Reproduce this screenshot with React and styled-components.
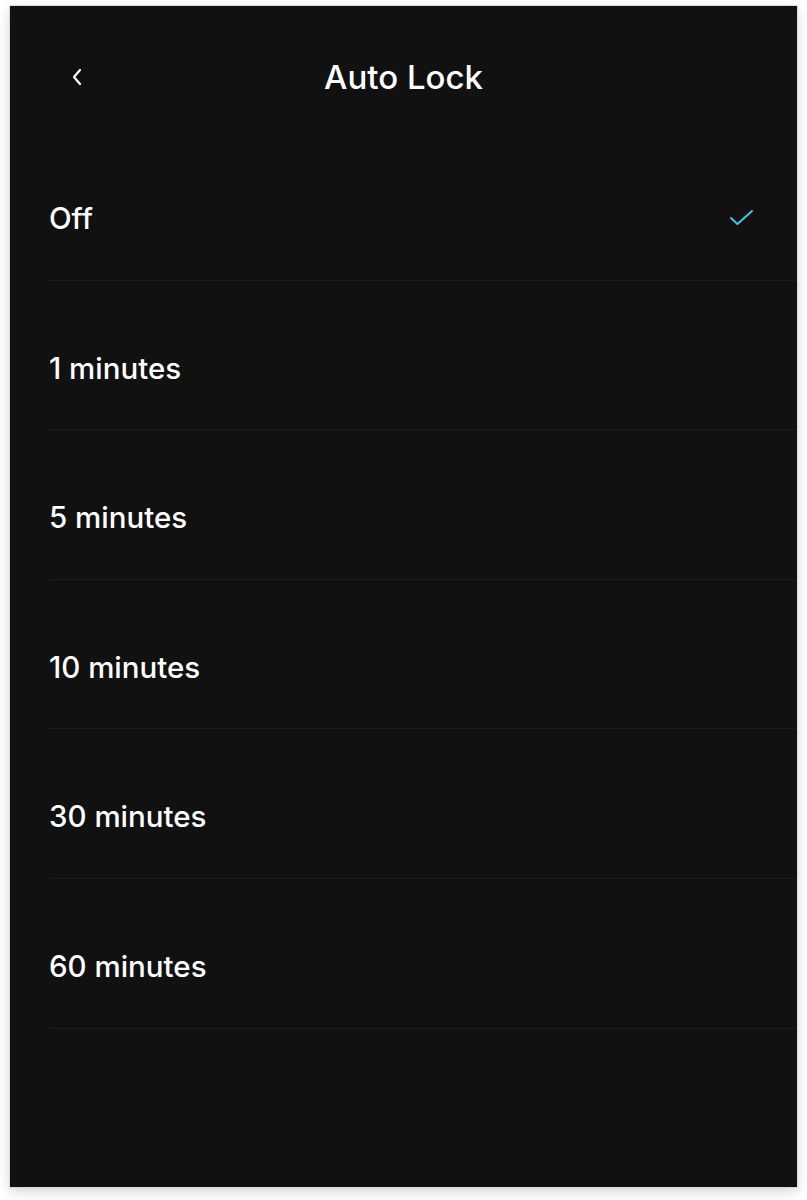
import React from "react";
import styled, { createGlobalStyle } from "styled-components";

const Global = createGlobalStyle`
  html, body { margin: 0; padding: 0; background: #ffffff; }
  body { font-family: Inter, "Noto Sans", sans-serif; }
`;

const Page = styled.div`
  padding: 6px 10px 13px 10px;
`;

const Panel = styled.div`
  background: #111111;
  height: 1181px;
  box-sizing: border-box;
  box-shadow: 0 0 0 1px #d9d9d9, 0 4px 12px rgba(0, 0, 0, 0.18);
  display: flex;
  flex-direction: column;
  color: #ffffff;
`;

const Header = styled.div`
  height: 125px;
  box-sizing: border-box;
  padding-top: 54px;
  display: grid;
  grid-template-columns: 120px 1fr 120px;
  align-items: start;
`;

const BackButton = styled.button`
  background: none;
  border: none;
  padding: 0;
  margin-left: 57px;
  width: 20px;
  height: 34px;
  display: flex;
  align-items: center;
  justify-content: center;
  color: #ffffff;
  cursor: pointer;
`;

const Title = styled.h1`
  margin: 0;
  text-align: center;
  font-size: 33px;
  line-height: 34px;
  font-weight: 500;
  letter-spacing: 0;
`;

const List = styled.ul`
  list-style: none;
  margin: 0;
  padding: 0 0 0 39px;
`;

const Row = styled.li`
  height: 149.6px;
  box-sizing: border-box;
  padding: 70px 42px 0 0;
  border-bottom: 1px solid #1d1d1d;
  display: flex;
  align-items: flex-start;
  justify-content: space-between;
  cursor: pointer;
`;

const Label = styled.span`
  font-size: 29.5px;
  line-height: 34px;
  font-weight: 500;
  letter-spacing: 0;
`;

const Check = styled.span`
  display: flex;
  align-items: center;
  height: 34px;
  color: #3fc6ef;
`;

const options = ["Off", "1 minutes", "5 minutes", "10 minutes", "30 minutes", "60 minutes"];

export default function App() {
  const selected = "Off";
  return (
    <>
      <Global />
      <Page>
        <Panel>
          <Header>
            <BackButton aria-label="Back">
              <svg width="12" height="18" viewBox="0 0 12 18" fill="none">
                <path d="M9 2 L3 9 L9 16" stroke="currentColor" strokeWidth="2.2" strokeLinecap="round" strokeLinejoin="round" />
              </svg>
            </BackButton>
            <Title>Auto Lock</Title>
            <div />
          </Header>
          <List>
            {options.map((o) => (
              <Row key={o}>
                <Label>{o}</Label>
                {o === selected && (
                  <Check>
                    <svg width="26" height="20" viewBox="0 0 26 20" fill="none">
                      <path d="M2 10 L8.5 16 L23 3" stroke="currentColor" strokeWidth="2" strokeLinecap="round" strokeLinejoin="round" />
                    </svg>
                  </Check>
                )}
              </Row>
            ))}
          </List>
        </Panel>
      </Page>
    </>
  );
}
